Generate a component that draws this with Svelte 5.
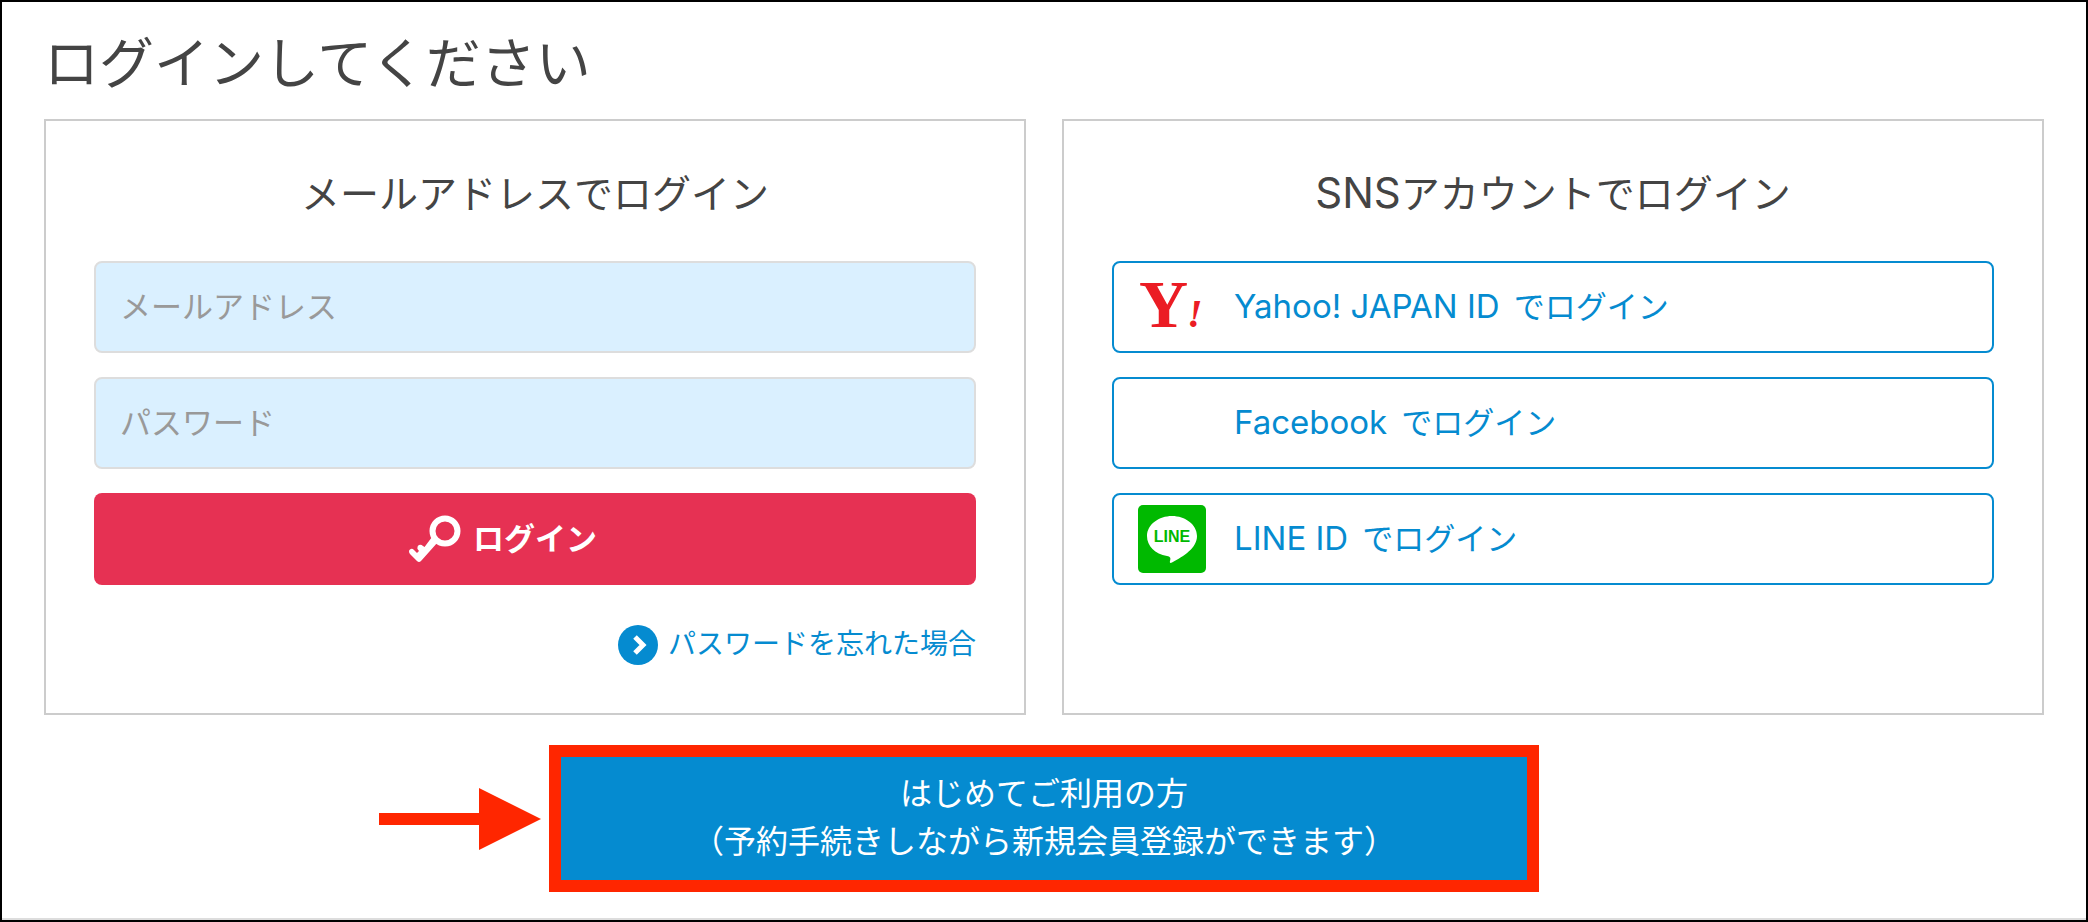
<script lang="ts">
    type SnsAccount = {
        id: string;
        name: string;
    };

    const accounts: SnsAccount[] = [
        { id: 'yahoo', name: 'Yahoo! JAPAN ID' },
        { id: 'facebook', name: 'Facebook' },
        { id: 'line', name: 'LINE ID' }
    ];

    let email = $state('');
    let password = $state('');

    const login = (event: SubmitEvent) => {
        event.preventDefault();
    };
</script>

<main>
    <h1>ログインしてください</h1>

    <div class="panels">
        <section class="panel">
            <h2>メールアドレスでログイン</h2>
            <form class="stack" onsubmit={login}>
                <input type="email" placeholder="メールアドレス" aria-label="メールアドレス" bind:value={email} />
                <input type="password" placeholder="パスワード" aria-label="パスワード" bind:value={password} />
                <button class="login" type="submit">
                    <svg class="key" viewBox="0 0 52 48" aria-hidden="true">
                        <circle cx="36" cy="16" r="12.5" fill="none" stroke="#fff" stroke-width="6" />
                        <path
                            d="M23 22 L28.500 27.500 L12 46 Q10 48 8 46 L1 39 Q-1 36 1 34.500 Q3 33 5 35 L8 38 L10 36 L8.500 34 Q8 31 10 30 Q12 29 14 31 L15.500 32 Z"
                            fill="#fff"
                        />
                    </svg>
                    <span class="caption">ログイン</span>
                </button>
            </form>
            <a class="forgot" href="#forgot">
                <svg viewBox="0 0 40 40" aria-hidden="true">
                    <circle cx="20" cy="20" r="20" fill="#058bd0" />
                    <path d="M17 12 L25 20 L17 28" fill="none" stroke="#fff" stroke-width="5" />
                </svg>
                <span class="caption">パスワードを忘れた場合</span>
            </a>
        </section>

        <section class="panel">
            <h2><span class="latin">SNS</span>アカウントでログイン</h2>
            <div class="stack">
                {#each accounts as account (account.id)}
                    <button class="sns" type="button">
                        <span class="logo">
                            {#if account.id === 'yahoo'}
                                <svg viewBox="0 0 68 68" aria-hidden="true">
                                    <text class="yahoo" x="1" y="54">Y</text>
                                    <text class="yahoo bang" x="49" y="54">!</text>
                                </svg>
                            {:else if account.id === 'line'}
                                <svg viewBox="0 0 68 68" aria-hidden="true">
                                    <rect width="68" height="68" rx="5" fill="#00b900" />
                                    <path
                                        d="M34 11 C47 11 59 19.500 59 31 C59 43 46 51 34 57.500 C32 58.500 31.500 57.500 32 56 C33 52.500 32 51.500 29 51 C17 49 9 41 9 31 C9 19.500 21 11 34 11 Z"
                                        fill="#fff"
                                    />
                                    <text class="line" x="34" y="37">LINE</text>
                                </svg>
                            {/if}
                        </span>
                        <span class="caption account">
                            <span class="latin">{account.name}</span>
                            <span>でログイン</span>
                        </span>
                    </button>
                {/each}
            </div>
        </section>
    </div>

    <div class="first-time">
        <svg class="arrow" viewBox="0 0 162 62" aria-hidden="true">
            <path d="M0 25 H100 V0 L162 31 L100 62 V37 H0 Z" fill="#ff2600" />
        </svg>
        <button class="register" type="button">
            はじめてご利用の方<br />（予約手続きしながら新規会員登録ができます）
        </button>
    </div>

    <hr />
</main>

<style>
    :global(body) {
        margin: 0;
        background: #fff;
    }

    main {
        display: flex;
        flex-direction: column;
        box-sizing: border-box;
        min-height: 100vh;
        padding: 17px 42px 0;
        border: 2px solid #000;
        color: #444;
        font-family: 'Noto Sans CJK JP', sans-serif;
        font-size: 31px;
    }

    h1 {
        margin: 0 0 20px;
        font-size: 55px;
        font-weight: 400;
        line-height: 80px;
    }

    h2 {
        margin: 0 0 40px;
        font-size: 39px;
        font-weight: 400;
        line-height: 60px;
        text-align: center;
    }

    .latin {
        font-family: Inter, sans-serif;
        line-height: 1;
    }

    h2 .latin {
        font-size: 42px;
    }

    .panels {
        display: grid;
        grid-template-columns: 1fr 1fr;
        gap: 36px;
    }

    .panel {
        display: flex;
        flex-direction: column;
        padding: 40px 48px 48px;
        border: 2px solid #ccc;
    }

    .stack {
        display: grid;
        gap: 24px;
    }

    input,
    button {
        box-sizing: border-box;
        margin: 0;
        font: inherit;
    }

    input {
        width: 100%;
        height: 92px;
        padding: 0 24px 6px;
        border: 2px solid #ddd;
        border-radius: 8px;
        background: #daf0ff;
        color: #444;
    }

    input::placeholder {
        color: #999;
        opacity: 1;
    }

    button {
        cursor: pointer;
    }

    /* lifts the tall Japanese line box to the optical middle */
    .caption {
        padding-bottom: 6px;
    }

    .login {
        display: grid;
        grid-template-columns: 1fr auto 1fr;
        align-items: center;
        gap: 12px;
        height: 92px;
        padding: 0;
        border: 0;
        border-radius: 8px;
        background: #e63153;
        color: #fff;
        font-weight: 700;
    }

    .key {
        justify-self: end;
        width: 52px;
        height: 48px;
    }

    .forgot {
        display: flex;
        align-items: center;
        align-self: flex-end;
        gap: 10px;
        height: 40px;
        margin-top: 40px;
        color: #058bd0;
        font-size: 28px;
        text-decoration: none;
    }

    .forgot svg {
        width: 40px;
        height: 40px;
    }

    .sns {
        display: flex;
        align-items: center;
        gap: 28px;
        height: 92px;
        padding: 0 24px;
        border: 2px solid #058bd0;
        border-radius: 8px;
        background: #fff;
        color: #058bd0;
        text-align: left;
    }

    .account {
        display: flex;
        align-items: baseline;
        gap: 14px;
    }

    .sns .latin {
        font-size: 33px;
    }

    .logo {
        width: 68px;
        height: 68px;
    }

    .logo svg {
        display: block;
        width: 100%;
        height: 100%;
    }

    .yahoo {
        fill: #eb1c24;
        font-family: 'Liberation Serif', serif;
        font-size: 68px;
        font-weight: 700;
    }

    .bang {
        font-size: 40px;
        font-style: italic;
    }

    .line {
        fill: #00b900;
        font-family: 'Liberation Sans', sans-serif;
        font-size: 16px;
        font-weight: 700;
        text-anchor: middle;
    }

    .first-time {
        display: grid;
        grid-template-columns: 1fr auto 1fr;
        align-items: center;
        gap: 8px;
        margin: 30px 0 24px;
    }

    .arrow {
        justify-self: end;
        width: 162px;
        height: 62px;
    }

    .register {
        width: 990px;
        padding: 10px 12px 17px;
        border: 12px solid #ff2600;
        background: #058bd0;
        color: #fff;
        font-size: 32px;
        line-height: 48px;
    }

    hr {
        width: 100%;
        margin: auto -42px 0;
        padding: 0 42px;
        border: 0;
        border-bottom: 2px solid #ddd;
    }
</style>
